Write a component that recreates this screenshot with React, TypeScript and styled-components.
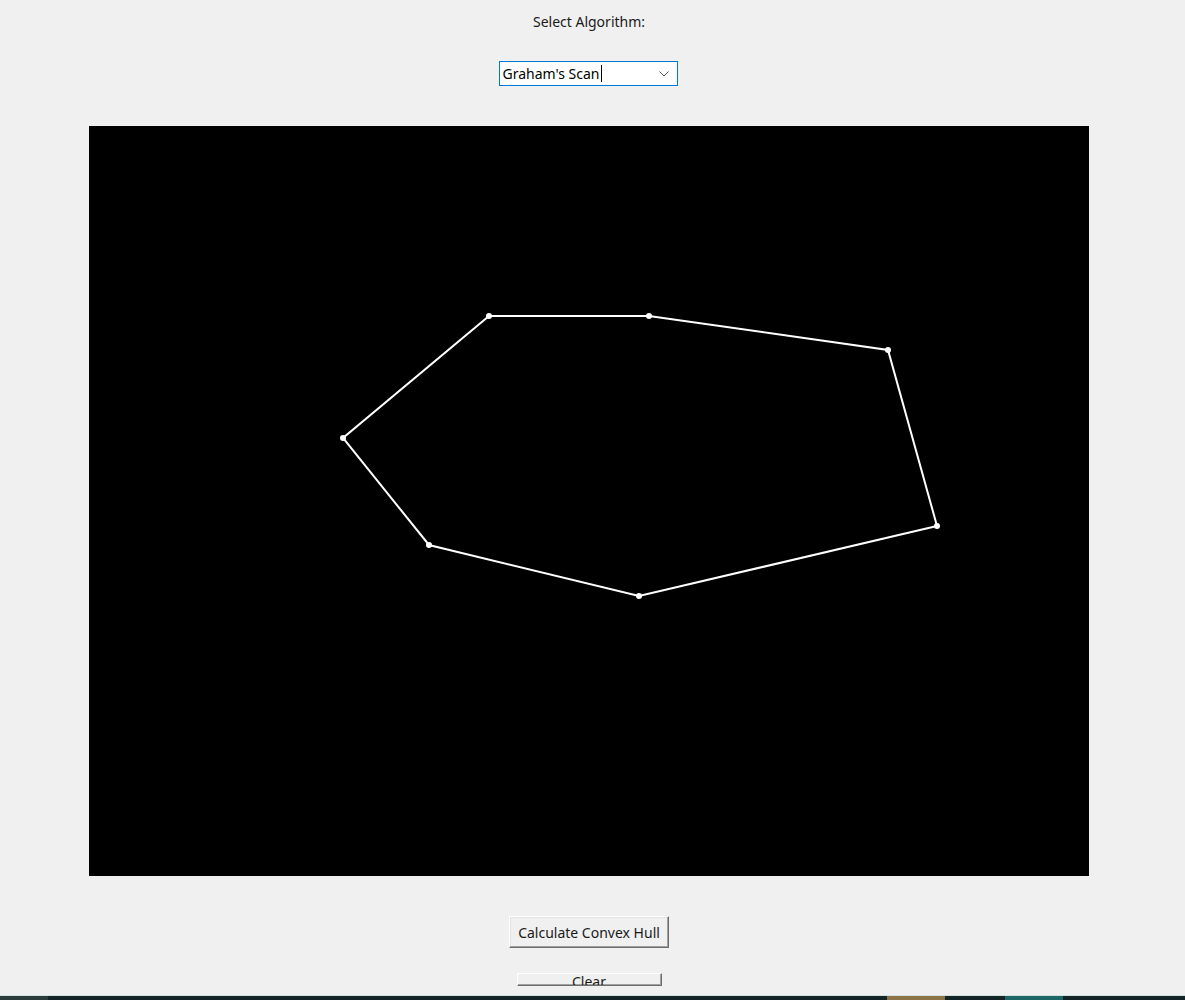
import React from "react";
import styled, { createGlobalStyle } from "styled-components";

const Global = createGlobalStyle`
  html, body { margin: 0; padding: 0; background: #f0f0f0; }
  body { font-family: "Noto Sans", "Open Sans", sans-serif; }
`;

const Page = styled.div`
  height: 1000px;
  display: flex;
  flex-direction: column;
  background: #f0f0f0;
  overflow: hidden;
`;

const Content = styled.div`
  width: 1178px;
  display: flex;
  flex-direction: column;
  align-items: center;
  padding-top: 12px;
`;

const Label = styled.div`
  font-size: 14px;
  line-height: 20px;
  color: #1a1a1a;
`;

const Combo = styled.div`
  margin: 29px 2px 0 0;
  width: 179px;
  height: 25px;
  box-sizing: border-box;
  border: 1px solid #0078d7;
  background: #ffffff;
  display: flex;
  align-items: center;
  padding: 0 8px 0 3px;
  font-size: 14px;
  color: #000;
`;

const ComboText = styled.span`
  flex: 1;
  display: flex;
  align-items: center;
`;

const Caret = styled.span`
  display: inline-block;
  width: 1px;
  height: 17px;
  background: #000;
  margin-left: 1px;
`;

const Board = styled.div`
  margin-top: 40px;
  width: 1000px;
  height: 750px;
  background: #000;
`;

const HullButton = styled.button`
  margin-top: 40px;
  height: 32px;
  padding: 0 8px;
  box-sizing: border-box;
  font-family: "Noto Sans", "Open Sans", sans-serif;
  font-size: 14px;
  color: #1a1a1a;
  background: #f0f0f0;
  border: 1px solid;
  border-color: #ffffff #6d6d6d #6d6d6d #ffffff;
  box-shadow: inset -1px -1px 0 #a0a0a0, inset 1px 1px 0 #e3e3e3;
`;

const ClearButton = styled.button`
  margin-top: 25px;
  width: 145px;
  height: 13px;
  box-sizing: border-box;
  padding: 0;
  overflow: hidden;
  font-family: "Noto Sans", "Open Sans", sans-serif;
  font-size: 14px;
  line-height: 14px;
  color: #1a1a1a;
  background: #f0f0f0;
  border: 1px solid;
  border-color: #ffffff #6d6d6d #6d6d6d #ffffff;
  box-shadow: inset -1px -1px 0 #a0a0a0;
  display: flex;
  justify-content: center;
  align-items: flex-start;
`;

const ClearText = styled.span`
  margin-top: 1px;
`;

const Taskbar = styled.div`
  margin-top: auto;
  height: 4px;
  display: flex;
  background: #132526;
  border-top: 1px solid #cfe0df;
`;

const TaskSeg = styled.div<{ $w: number; $ml: number; $c: string }>`
  width: ${(p) => p.$w}px;
  margin-left: ${(p) => p.$ml}px;
  background: ${(p) => p.$c};
`;

const pts: [number, number][] = [
  [400, 190],
  [560, 190],
  [799, 224],
  [848, 400],
  [550, 470],
  [340, 419],
  [254, 312],
];

export default function App() {
  const poly = pts.map((p) => p.join(",")).join(" ");
  return (
    <Page>
      <Global />
      <Content>
        <Label>Select Algorithm:</Label>
        <Combo>
          <ComboText>
            Graham's Scan
            <Caret />
          </ComboText>
          <svg width="10" height="6" viewBox="0 0 10 6">
            <path d="M0.5 0.5 L5 5 L9.5 0.5" fill="none" stroke="#555" strokeWidth="1" />
          </svg>
        </Combo>
        <Board>
          <svg width="1000" height="750" viewBox="0 0 1000 750">
            <polygon points={poly} fill="none" stroke="#fff" strokeWidth="2" />
            {pts.map((p, i) => (
              <circle key={i} cx={p[0]} cy={p[1]} r="3" fill="#fff" />
            ))}
          </svg>
        </Board>
        <HullButton>Calculate Convex Hull</HullButton>
        <ClearButton>
          <ClearText>Clear</ClearText>
        </ClearButton>
      </Content>
      <Taskbar>
        <TaskSeg $w={48} $ml={0} $c="#2c3c3c" />
        <TaskSeg $w={58} $ml={839} $c="#8a7448" />
        <TaskSeg $w={58} $ml={60} $c="#1d6766" />
      </Taskbar>
    </Page>
  );
}
